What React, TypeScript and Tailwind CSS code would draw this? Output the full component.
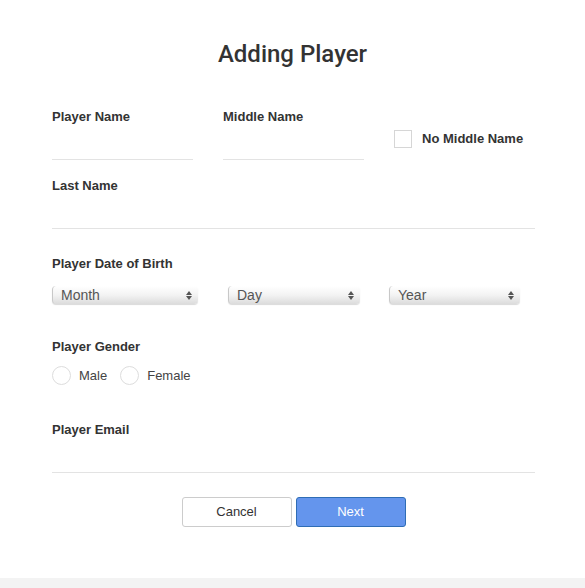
const sans = { fontFamily: '"Liberation Sans", Arial, sans-serif' };

function Label({ children }: { children: React.ReactNode }) {
  return <div className="text-[13px] font-bold leading-4 text-[#333]">{children}</div>;
}

function Select({ label, width }: { label: string; width: string }) {
  return (
    <div
      className={`${width} h-[18px] flex items-center justify-between pl-2 pr-1.5 rounded-[4px] border-l border-[#c8c8c8] bg-gradient-to-b from-white via-[#f3f3f3] to-[#dcdcdc] shadow-[0_1px_1px_rgba(0,0,0,0.15)]`}
    >
      <span className="text-[14px] leading-none text-[#555]">{label}</span>
      <span className="flex flex-col items-center leading-none">
        <svg width="6" height="4" viewBox="0 0 6 4"><path d="M3 0L6 4H0z" fill="#555" /></svg>
        <svg width="6" height="4" viewBox="0 0 6 4" className="mt-[1px]"><path d="M0 0h6L3 4z" fill="#555" /></svg>
      </span>
    </div>
  );
}

function Radio({ label }: { label: string }) {
  return (
    <div className="flex items-center gap-2">
      <span className="w-[19px] h-[19px] rounded-full border border-[#ddd] bg-white" />
      <span className="text-[13px] text-[#444]">{label}</span>
    </div>
  );
}

export default function App() {
  return (
    <div className="w-[585px] h-[588px] bg-white flex flex-col" style={sans}>
      <h1
        className="text-center text-[24px] font-medium text-[#333] pt-[40px] leading-7"
        style={{ fontFamily: 'Roboto, "Liberation Sans", sans-serif' }}
      >
        Adding Player
      </h1>

      <div className="pl-[52px] pr-[50px] mt-[41px]">
        {/* name row */}
        <div className="flex">
          <div className="w-[141px]">
            <Label>Player Name</Label>
            <div className="h-[35px] border-b border-[#e3e3e3]" />
          </div>
          <div className="w-[141px] ml-[30px]">
            <Label>Middle Name</Label>
            <div className="h-[35px] border-b border-[#e3e3e3]" />
          </div>
          <div className="ml-[30px] mt-[21px] flex items-center gap-[10px] h-[18px]">
            <span className="w-[18px] h-[18px] border border-[#d6d6d6] bg-white" />
            <span className="text-[13px] font-bold text-[#333]">No Middle Name</span>
          </div>
        </div>

        <div className="mt-[18px]">
          <Label>Last Name</Label>
          <div className="h-[35px] border-b border-[#e3e3e3]" />
        </div>

        <div className="mt-[27px]">
          <Label>Player Date of Birth</Label>
          <div className="flex mt-[14px]">
            <Select label="Month" width="w-[146px]" />
            <div className="ml-[30px]"><Select label="Day" width="w-[132px]" /></div>
            <div className="ml-[29px]"><Select label="Year" width="w-[131px]" /></div>
          </div>
        </div>

        <div className="mt-[35px]">
          <Label>Player Gender</Label>
          <div className="flex gap-[13px] mt-[11px]">
            <Radio label="Male" />
            <Radio label="Female" />
          </div>
        </div>

        <div className="mt-[36px]">
          <Label>Player Email</Label>
          <div className="h-[35px] border-b border-[#e3e3e3]" />
        </div>

        <div className="flex justify-center gap-[4px] mt-[24px]">
          <button className="w-[110px] h-[30px] rounded-[3px] border border-[#ccc] bg-white text-[13px] text-[#333]">
            Cancel
          </button>
          <button className="w-[110px] h-[30px] rounded-[3px] border border-[#2f6db5] bg-[#6495ed] text-[13px] text-white">
            Next
          </button>
        </div>
      </div>

      <div className="mt-auto h-[10px] bg-[#f3f3f3]" />
    </div>
  );
}
